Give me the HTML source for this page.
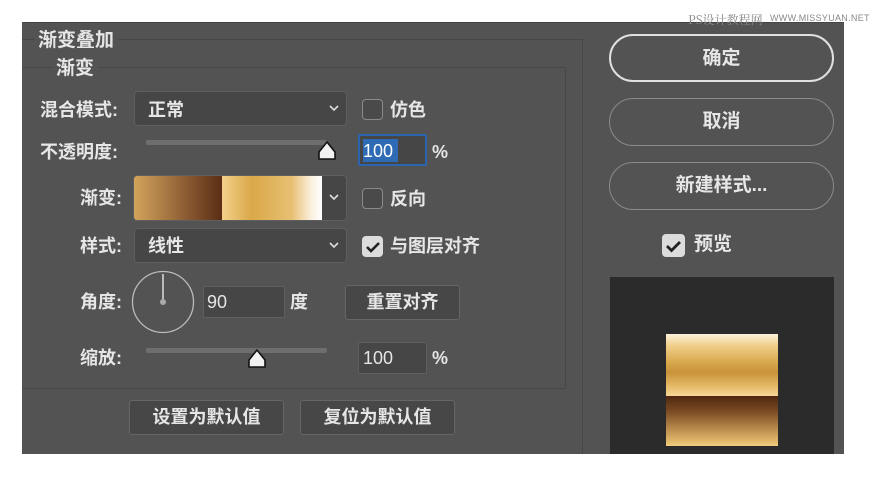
<!DOCTYPE html>
<html><head><meta charset="utf-8"><style>
*{margin:0;padding:0;box-sizing:border-box}
body{width:870px;height:478px;background:#fff;position:relative;overflow:hidden;font-family:"Liberation Sans","Noto Sans CJK SC",sans-serif;color:#e6e6e6}
.a{position:absolute}
.t{position:absolute;font-size:18px;line-height:22px;font-weight:700;white-space:nowrap}
.dd{position:absolute;background:#464646;border:1px solid #5e5e5e;border-radius:4px}
.cb{position:absolute;width:21px;height:21px;border:1.5px solid #8a8a8a;border-radius:4px;background:#4a4a4a}
.ck{background:#dcdcdc;border-color:#dcdcdc}
.inp{position:absolute;background:#464646;border:1px solid #5f5f5f;border-radius:2px}
.btn{position:absolute;background:#474747;border:1px solid #666;border-radius:3px;text-align:center;font-size:18px;line-height:33px;font-weight:700}
.rb{position:absolute;left:609px;width:225px;height:48px;border-radius:24px;text-align:center;font-size:19px;line-height:46px;font-weight:700}
.trk{position:absolute;height:5px;background:#6e6e6e;border-radius:2px}
</style></head><body>
<div class="a" style="left:22px;top:22px;width:822px;height:432px;background:#535353;border-top:1px solid #444"></div>
<div class="a" style="left:688px;top:11px;font-size:12px;color:#888;font-family:'Noto Serif CJK SC',serif">PS设计教程网</div>
<div class="a" style="left:770px;top:13px;font-size:9px;color:#888;letter-spacing:0.3px">WWW.MISSYUAN.NET</div>
<div class="a" style="left:22px;top:39px;width:561px;height:415px;border-top:1px solid #474747;border-right:1px solid #474747"></div>
<div class="a" style="left:22px;top:67px;width:544px;height:322px;border-top:1px solid #474747;border-right:1px solid #474747;border-bottom:1px solid #474747"></div>
<div class="t" style="left:34px;top:30px;font-size:19px;background:#535353;padding:0 4px">渐变叠加</div>
<div class="t" style="left:52px;top:58px;font-size:19px;background:#535353;padding:0 4px">渐变</div>
<div class="t" style="left:40px;top:99px">混合模式:</div>
<div class="dd" style="left:134px;top:91px;width:213px;height:35px"></div>
<div class="t" style="left:148px;top:99px">正常</div>
<svg class="a" style="left:328px;top:104px" width="12" height="8"><path d="M2 2L6 6L10 2" stroke="#ddd" stroke-width="1.6" fill="none"/></svg>
<div class="cb" style="left:362px;top:99px"></div>
<div class="t" style="left:390px;top:99px">仿色</div>
<div class="t" style="left:40px;top:141px">不透明度:</div>
<div class="trk" style="left:146px;top:140px;width:181px"></div>
<svg class="a" style="left:316px;top:140px" width="22" height="24"><path d="M11 2L19 12V19H3V12Z" fill="#f2f2f2" stroke="#111" stroke-width="1.6" stroke-linejoin="round"/></svg>
<div class="inp" style="left:358px;top:134px;width:69px;height:32px;border:2px solid #2c64b0"></div>
<div class="a" style="left:363px;top:139px;width:35px;height:23px;background:#2f6bb5"></div>
<div class="t" style="left:363px;top:140px;color:#fff;font-weight:400">100</div>
<div class="t" style="left:432px;top:141px">%</div>
<div class="t" style="left:80px;top:187px">渐变:</div>
<div class="dd" style="left:133px;top:175px;width:214px;height:46px"></div>
<div class="a" style="left:134px;top:176px;width:88px;height:44px;background:linear-gradient(90deg,#d2a45a,#b08048 30%,#8a5a32 60%,#5a2e14);border-radius:3px 0 0 3px"></div>
<div class="a" style="left:222px;top:176px;width:100px;height:44px;background:linear-gradient(90deg,#f3d08a,#d9a848 30%,#e8c074 70%,#fbf2e2 90%,#fff)"></div>
<svg class="a" style="left:328px;top:193px" width="12" height="8"><path d="M2 2L6 6L10 2" stroke="#ddd" stroke-width="1.6" fill="none"/></svg>
<div class="cb" style="left:362px;top:188px"></div>
<div class="t" style="left:390px;top:188px">反向</div>
<div class="t" style="left:80px;top:235px">样式:</div>
<div class="dd" style="left:134px;top:228px;width:213px;height:35px"></div>
<div class="t" style="left:148px;top:235px">线性</div>
<svg class="a" style="left:328px;top:241px" width="12" height="8"><path d="M2 2L6 6L10 2" stroke="#ddd" stroke-width="1.6" fill="none"/></svg>
<div class="cb ck" style="left:362px;top:236px"></div>
<svg class="a" style="left:365px;top:240px" width="16" height="14"><path d="M2 7L6 11L14 3" stroke="#222" stroke-width="2.6" fill="none"/></svg>
<div class="t" style="left:390px;top:235px">与图层对齐</div>
<div class="t" style="left:80px;top:291px">角度:</div>
<svg class="a" style="left:131px;top:270px" width="64" height="64"><circle cx="32" cy="32" r="30.5" stroke="#bbb" stroke-width="1.3" fill="none"/><line x1="32" y1="4" x2="32" y2="32" stroke="#ddd" stroke-width="1.5"/><circle cx="32" cy="32" r="3" fill="#aaa"/></svg>
<div class="inp" style="left:203px;top:286px;width:82px;height:32px"></div>
<div class="t" style="left:207px;top:291px;font-weight:400">90</div>
<div class="t" style="left:290px;top:291px">度</div>
<div class="btn" style="left:345px;top:285px;width:115px;height:35px">重置对齐</div>
<div class="t" style="left:80px;top:347px">缩放:</div>
<div class="trk" style="left:146px;top:348px;width:181px"></div>
<svg class="a" style="left:246px;top:348px" width="22" height="24"><path d="M11 2L19 12V19H3V12Z" fill="#f2f2f2" stroke="#111" stroke-width="1.6" stroke-linejoin="round"/></svg>
<div class="inp" style="left:358px;top:342px;width:69px;height:32px"></div>
<div class="t" style="left:363px;top:347px;font-weight:400">100</div>
<div class="t" style="left:432px;top:347px">%</div>
<div class="btn" style="left:129px;top:400px;width:155px;height:35px">设置为默认值</div>
<div class="btn" style="left:300px;top:400px;width:155px;height:35px">复位为默认值</div>
<div class="rb" style="top:34px;border:2px solid #e0e0e0">确定</div>
<div class="rb" style="top:98px;border:1.5px solid #8a8a8a">取消</div>
<div class="rb" style="top:162px;border:1.5px solid #8a8a8a">新建样式...</div>
<div class="cb ck" style="left:662px;top:234px;width:23px;height:23px"></div>
<svg class="a" style="left:665px;top:239px" width="18" height="14"><path d="M2 7L6.5 11.5L15 3" stroke="#222" stroke-width="2.8" fill="none"/></svg>
<div class="t" style="left:694px;top:234px;font-size:19px">预览</div>
<div class="a" style="left:610px;top:277px;width:224px;height:177px;background:#2b2b2b"></div>
<div class="a" style="left:666px;top:334px;width:112px;height:62px;background:linear-gradient(180deg,#fbf1dc,#f1d08c 18%,#d9a94e 45%,#c8923a 62%,#e7bc6a 85%,#f6d898)"></div>
<div class="a" style="left:666px;top:396px;width:112px;height:50px;background:linear-gradient(180deg,#4e2710,#7a4a22 30%,#b88a4c 65%,#e2b86a 90%,#f0cc80)"></div>
</body></html>
